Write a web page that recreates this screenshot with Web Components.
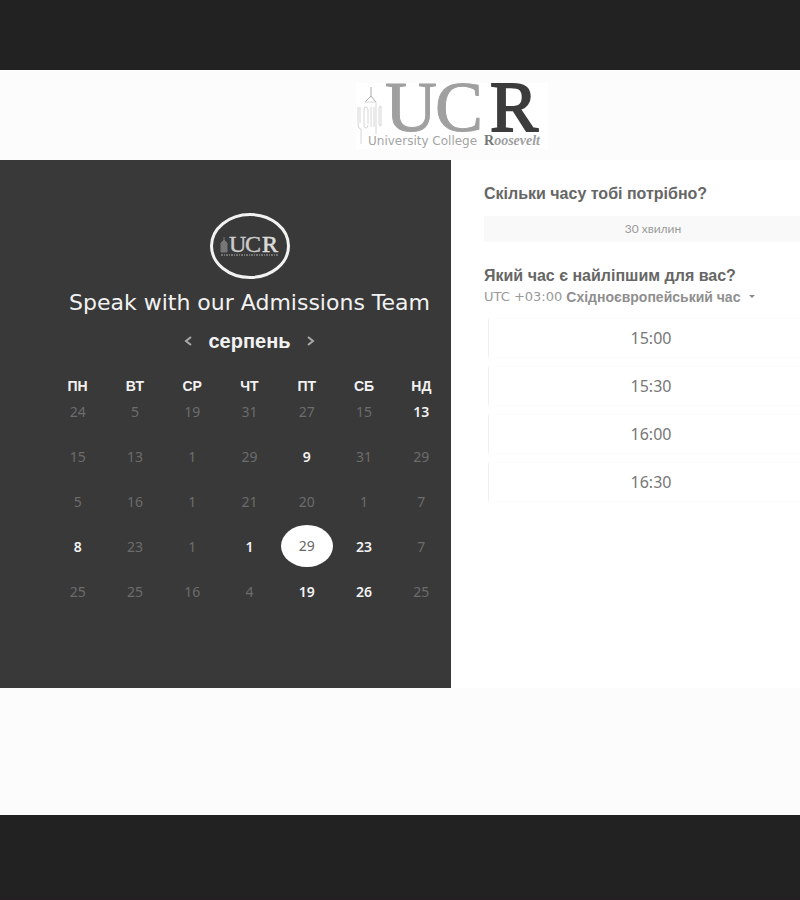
<!DOCTYPE html>
<html lang="uk">
<head>
<meta charset="utf-8">
<meta name="viewport" content="width=device-width, initial-scale=1">
<title>UCR – Speak with our Admissions Team</title>
<style>
  html, body { margin: 0; min-height: 100%; }
  body { background: #222; font-family: "Liberation Sans", sans-serif; color: #555; }
</style>
</head>
<body>
<booking-page>
  <brand-logo slot="header"></brand-logo>
  <booking-calendar slot="calendar" heading="Speak with our Admissions Team" month="серпень"></booking-calendar>
  <time-picker slot="times">
    <time-slot>15:00</time-slot>
    <time-slot>15:30</time-slot>
    <time-slot>16:00</time-slot>
    <time-slot>16:30</time-slot>
  </time-picker>
</booking-page>

<script>
const define = (name, html, setup) => customElements.define(name, class extends HTMLElement {
  constructor() {
    super();
    this.attachShadow({ mode: 'open' }).innerHTML = html;
  }
  connectedCallback() { if (setup) setup(this, this.shadowRoot); }
});

define('brand-logo', `
  <style>
    :host { display: block; width: 192px; }
    svg { display: block; width: 100%; background: #fff; overflow: visible; }
    text { font-family: "Liberation Serif", serif; }
  </style>
  <svg viewBox="0 0 192 66" role="img" aria-label="University College Roosevelt">
    <g fill="none" stroke="#d6d6d6" stroke-width="1">
      <path d="M15 4v10M15 13l-6 6M15 13l5 6" stroke="#aaa"/>
      <path d="M9 19h11M2 24v18q0 4 3 4M5 46v15M4 24v16M8 27q0-3 2-3t2 3v14M8 27v15q0 3 2 3t2-3M15 24v20M18 24v20M20 19v32M23 25q0-2 2-2v20q-2 0-2-2z"/>
    </g>
    <text x="29" y="48" font-size="72" fill="#a0a0a0" stroke="#a0a0a0">U</text>
    <text x="79" y="48" font-size="72" fill="#a0a0a0" stroke="#a0a0a0">C</text>
    <text x="134" y="48" font-size="72" fill="#3c3c3c" stroke="#3c3c3c" stroke-width="2">R</text>
    <text x="12" y="62" font-size="12" fill="#a4a4a4" style="font-family:'DejaVu Sans',sans-serif">University College</text>
    <text x="128" y="62" font-size="14" fill="#777" font-weight="700">R<tspan fill="#a0a0a0" font-style="italic">oosevelt</tspan></text>
  </svg>`);

define('brand-badge', `
  <style>
    :host { display: block; width: 80px; }
    svg { display: block; width: 100%; }
    text { font-family: "Liberation Serif", serif; }
  </style>
  <svg viewBox="0 0 80 66" role="img" aria-label="UCR">
    <ellipse cx="40" cy="33" rx="38.5" ry="31.5" fill="none" stroke="#f2f2f2" stroke-width="3"/>
    <path d="M14 24v5M11 30l3-3 3 3v9h-6z" fill="#777" stroke="#777"/>
    <text x="19" y="39" font-size="24" fill="#ccc" stroke="#ccc" stroke-width=".4">U</text>
    <text x="35" y="39" font-size="24" fill="#ccc" stroke="#ccc" stroke-width=".4">C</text>
    <text x="52" y="39" font-size="24" fill="#ddd" stroke="#ddd" stroke-width=".6">R</text>
    <path d="M11 42h58" stroke="#757575" stroke-width="2" stroke-dasharray="2 1 1 1"/>
  </svg>`);

define('booking-page', `
  <style>
    :host { display: flex; flex-direction: column; min-height: 100vh; overflow: hidden; }
    .bar { background: #222; height: 70px; flex: none; }
    .bar.end { height: 83px; border-bottom: 2px solid #251e24; }
    header { display: flex; justify-content: center; padding: 13px 0 11px 104px; background: #fcfcfc; }
    main { display: grid; grid-template-columns: 451fr 349fr; background: #fff; }
    .rest { flex: 1; min-height: 64px; background: #fcfcfc; }
  </style>
  <div class="bar"></div>
  <header><slot name="header"></slot></header>
  <main><slot name="calendar"></slot><slot name="times"></slot></main>
  <div class="rest"></div>
  <div class="bar end"></div>`);

const WEEKDAYS = ['ПН', 'ВТ', 'СР', 'ЧТ', 'ПТ', 'СБ', 'НД'];
/* "+" marks an available day, "*" the selected one */
const WEEKS = [
  '24 5 19 31 27 15 +13',
  '15 13 1 29 +9 31 29',
  '5 16 1 21 20 1 7',
  '+8 23 1 +1 *29 +23 7',
  '25 25 16 4 +19 +26 25'
];

define('booking-calendar', `
  <style>
    :host { display: flex; flex-direction: column; align-items: center; box-sizing: border-box;
            padding: 53px 1px 63px 49px; background: #393939; color: #f2f2f2; }
    h1 { margin: 8px 0 0; font: 400 22px/32px "DejaVu Sans", sans-serif; white-space: nowrap; }
    nav { display: flex; align-items: center; gap: 16px; margin-top: 10px; }
    h2 { margin: 0; font: 700 20px/24px "Liberation Sans", sans-serif; }
    button { border: 0; padding: 0; background: none; color: inherit; font: inherit; cursor: pointer; }
    nav button { display: flex; color: #aaa; }
    nav svg { width: 8px; height: 10px; }
    table { width: 100%; margin-top: 23px; border-collapse: collapse; table-layout: fixed; text-align: center; }
    th { height: 20px; padding: 0 0 4px; font: 700 14px/20px "Liberation Sans", sans-serif; }
    td { padding: 0 0 21px; font: 400 14px/20px "Noto Sans", sans-serif; }
    td button { display: block; width: 52px; height: 24px; margin: 0 auto; border-radius: 50%; }
    button:disabled { color: #6c6c6c; cursor: default; }
    .open { font-weight: 600; }
    .chosen { height: 42px; margin: -10px auto -8px; background: #fff; color: #666; }
  </style>
  <brand-badge></brand-badge>
  <h1></h1>
  <nav>
    <button type="button" aria-label="Попередній місяць"><svg viewBox="0 0 8 10" fill="none" stroke="currentColor" stroke-width="2"><path d="M7 1 2 5l5 4"/></svg></button>
    <h2></h2>
    <button type="button" aria-label="Наступний місяць"><svg viewBox="0 0 8 10" fill="none" stroke="currentColor" stroke-width="2"><path d="m1 1 5 4-5 4"/></svg></button>
  </nav>
  <table><thead><tr></tr></thead><tbody></tbody></table>`,
  (host, root) => {
    root.querySelector('h1').textContent = host.getAttribute('heading');
    root.querySelector('h2').textContent = host.getAttribute('month');
    root.querySelector('thead tr').innerHTML = WEEKDAYS.map(d => `<th scope="col">${d}</th>`).join('');
    root.querySelector('tbody').innerHTML = WEEKS.map(w => '<tr>' + w.split(' ').map(d => {
      const state = d[0] === '+' ? 'class="open"' : d[0] === '*' ? 'class="chosen" aria-pressed="true"' : 'disabled';
      return `<td><button type="button" ${state}>${d.replace(/[+*]/, '')}</button></td>`;
    }).join('') + '</tr>').join('');
  });

define('time-slot', `
  <style>
    :host { display: block; }
    button { display: block; width: 100%; height: 40px; padding: 0; border: 1px solid #fcfcfc; border-left-color: #efefef;
             border-radius: 2px; background: #fff; color: #777; font: 400 16px/24px "Noto Sans", sans-serif; cursor: pointer; }
  </style>
  <button type="button"><slot></slot></button>`);

define('time-picker', `
  <style>
    :host { display: block; padding: 24px 0 0 33px; min-width: 0; overflow: hidden; }
    h2 { margin: 0; font: 700 16px/20px "Liberation Sans", sans-serif; color: #666; }
    .duration { display: block; width: calc(100% + 22px); height: 26px; margin: 12px 0 24px; padding: 0; border: 0;
                background: #f9f9f9; color: #999; font: 400 12px/20px Lato, "Liberation Sans", sans-serif; }
    .zone { display: flex; align-items: center; gap: 4px; height: 22px; color: #999; font: 400 13px/20px "DejaVu Sans", sans-serif; }
    select { appearance: none; border: 0; padding: 0; margin: 0; background: none; color: #8f8f8f;
             font: 700 14px/20px "Liberation Sans", sans-serif; }
    svg { width: 6px; height: 4px; margin-left: 4px; }
    .slots { display: grid; gap: 8px; margin: 10px -14px 0 4px; }
  </style>
  <h2>Скільки часу тобі потрібно?</h2>
  <button class="duration" type="button">30 хвилин</button>
  <h2>Який час є найліпшим для вас?</h2>
  <div class="zone">
    <label for="zone">UTC +03:00</label>
    <select id="zone"><option>Східноєвропейський час</option></select>
    <svg viewBox="0 0 6 4" aria-hidden="true"><path d="M0 0h6L3 3z" fill="#888"/></svg>
  </div>
  <div class="slots"><slot></slot></div>`);
</script>
</body>
</html>
